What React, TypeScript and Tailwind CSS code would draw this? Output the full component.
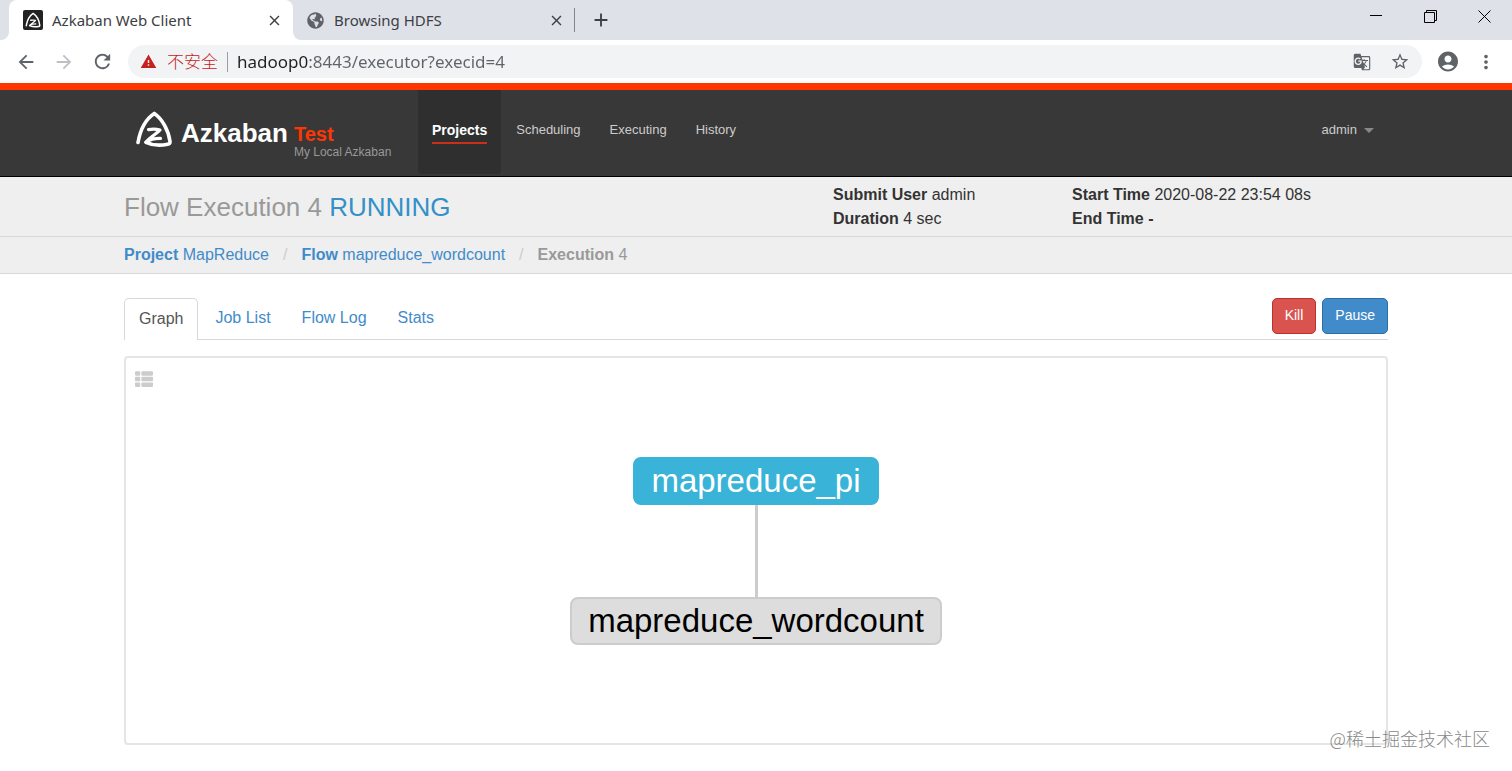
import type { ReactNode } from 'react';
import { FaGlobeAmericas, FaThList } from 'react-icons/fa';
import {
  MdAccountCircle, MdAdd, MdArrowBack, MdArrowForward, MdClose, MdGTranslate,
  MdMoreVert, MdRefresh, MdStarBorder, MdWarning,
} from 'react-icons/md';

const NAV = ['Projects', 'Scheduling', 'Executing', 'History'];
const TABS = ['Graph', 'Job List', 'Flow Log', 'Stats'];

function AzkabanMark({ className }: { className?: string }) {
  return (
    <svg viewBox="0 0 38 38" className={className} fill="none" stroke="currentColor" strokeLinecap="round" strokeLinejoin="round" aria-hidden>
      <path d="M3 32.500C5 21 10 9.500 19.300 3.400C27 8.500 33.500 20 35 31.500C35.200 33.500 34.500 33.900 32.500 34.300C25 35.800 17 35.200 11 32.300" strokeWidth="3.600" />
      <path d="M13.500 19.600C17 19 21.500 19 25 20C22 23.500 16 26.500 11 32C15.500 29.300 20 28.200 25.500 28.400" strokeWidth="3.200" />
    </svg>
  );
}

function IconBtn({ label, className = '', children }: { label: string; className?: string; children: ReactNode }) {
  return (
    <button type="button" aria-label={label} className={`flex flex-none items-center justify-center ${className}`}>
      {children}
    </button>
  );
}

function BrowserChrome() {
  return (
    <div className="bg-white font-['Noto_Sans','Noto_Sans_CJK_SC',sans-serif] text-[#3c4043]">
      {/* Tab strip */}
      <div className="flex h-10">
        <div className="w-[9px] flex-none rounded-br-lg bg-[#dee1e8]" />
        <div className="w-[284px] flex-none bg-linear-to-b from-[#dee1e8] from-50% to-white to-50%">
          <div className="flex h-full items-center rounded-t-lg bg-white pr-[9px] pl-[14px]">
            <span className="flex size-5 flex-none items-center justify-center rounded-xs bg-[#222] text-white">
              <AzkabanMark className="size-4" />
            </span>
            <span className="ml-[9px] flex-1 text-[15px] whitespace-nowrap">Azkaban Web Client</span>
            <IconBtn label="Close tab" className="size-5"><MdClose size={17} /></IconBtn>
          </div>
        </div>
        <div className="flex min-w-0 flex-1 items-center rounded-bl-lg bg-[#dee1e8] pl-[14px]">
          <FaGlobeAmericas size={17} className="flex-none text-[#5f6368]" />
          <span className="ml-[10px] w-[212px] flex-none text-[15px] whitespace-nowrap">Browsing HDFS</span>
          <IconBtn label="Close tab" className="size-5"><MdClose size={17} /></IconBtn>
          <div className="ml-2 h-6 w-px flex-none bg-[#80868b]" />
          <IconBtn label="New tab" className="ml-[14px] size-6"><MdAdd size={22} /></IconBtn>
          <div className="mb-2 ml-auto flex flex-none gap-[30px] pr-4 text-black">
            <IconBtn label="Minimize" className="size-6">
              <svg width="12" height="12" viewBox="0 0 12 12" stroke="currentColor" fill="none"><path d="M0 5.500h12" /></svg>
            </IconBtn>
            <IconBtn label="Restore" className="size-6">
              <svg width="13" height="13" viewBox="0 0 13 13" stroke="currentColor" fill="none"><path d="M.5 2.500h10v10h-10zM2.500 2.500v-2h10v10h-2" /></svg>
            </IconBtn>
            <IconBtn label="Close window" className="size-6">
              <svg width="13" height="13" viewBox="0 0 13 13" stroke="currentColor" fill="none"><path d="M.5.5l12 12M12.500.5l-12 12" /></svg>
            </IconBtn>
          </div>
        </div>
      </div>

      {/* Toolbar */}
      <div className="flex h-[43px] items-center px-[14px] text-[#5f6368]">
        <IconBtn label="Back" className="size-6"><MdArrowBack size={22} /></IconBtn>
        <IconBtn label="Forward" className="ml-[14px] size-6 text-[#bdc1c6]"><MdArrowForward size={22} /></IconBtn>
        <IconBtn label="Reload" className="ml-[14px] size-6"><MdRefresh size={23} /></IconBtn>
        <div className="ml-[14px] flex h-[33px] min-w-0 flex-1 items-center rounded-full bg-[#f1f3f4] px-[12px]">
          <MdWarning size={17} className="flex-none text-[#c5221f]" />
          <span className="ml-[10px] flex-none text-[17px] leading-6 font-light text-[#c5221f]">不安全</span>
          <span className="mx-[9px] h-5 w-px flex-none bg-[#9aa0a6]" />
          <input
            aria-label="Address"
            defaultValue="hadoop0:8443/executor?execid=4"
            className="min-w-0 flex-1 bg-[linear-gradient(to_right,#202124_71px,#5f6368_71px)] bg-clip-text text-[17px] leading-6 text-transparent outline-none"
          />
          <IconBtn label="Translate" className="size-5"><MdGTranslate size={18} /></IconBtn>
          <IconBtn label="Bookmark" className="ml-[18px] size-5"><MdStarBorder size={21} /></IconBtn>
        </div>
        <IconBtn label="Profile" className="ml-[14px] size-6"><MdAccountCircle size={27} /></IconBtn>
        <IconBtn label="Menu" className="ml-[14px] size-6"><MdMoreVert size={22} /></IconBtn>
      </div>
    </div>
  );
}

function Navbar() {
  return (
    <header className="border-t-[7px] border-b border-t-[#ff3601] border-b-black bg-[#383838]">
      <div className="mx-auto flex h-[86px] max-w-[1264px] items-start">
        <a href="#home" className="flex w-[294px] flex-none pt-5 pl-[11px]">
          <AzkabanMark className="size-[38px] flex-none text-white" />
          <span className="ml-2 pt-2 text-[26px] leading-[30px] font-bold text-white">Azkaban</span>
          <span className="ml-[6px] flex flex-col pt-[14px]">
            <span className="text-xl leading-5 font-bold text-[#ff3601]">Test</span>
            <span className="text-xs leading-4 whitespace-nowrap text-[#999]">My Local Azkaban</span>
          </span>
        </a>
        <nav className="flex gap-px">
          {NAV.map((item, i) => (
            <a
              key={item}
              href={`#${item.toLowerCase()}`}
              className={i === 0
                ? 'h-[84px] rounded-b-sm bg-[#2f2f2f] px-[14px] pt-[30px] text-sm leading-5 font-bold text-white'
                : 'h-[84px] px-[14px] pt-[30px] text-[13px] leading-5 text-[#ccc]'}
            >
              <span className={i === 0 ? 'block border-b-2 border-[#c9301c] pb-[2px]' : 'block'}>{item}</span>
            </a>
          ))}
        </nav>
        <button type="button" className="mt-[30px] mr-[14px] ml-auto flex items-center gap-[7px] text-[13px] leading-5 text-[#ccc]">
          admin
          <span className="border-x-[5px] border-t-[5px] border-x-transparent border-t-[#888]" />
        </button>
      </div>
    </header>
  );
}

function FlowHeader() {
  return (
    <div className="bg-[#efefef]">
      <div className="border-b border-[#d8d8d8]">
        <div className="mx-auto flex h-[59px] max-w-[1264px] items-center">
          <h1 className="w-[709px] text-[26px] leading-8 text-[#999]">
            Flow Execution 4 <span className="text-[#3490c8]">RUNNING</span>
          </h1>
          <div className="w-[239px] text-base text-[#333]">
            <p><b>Submit User</b> admin</p>
            <p><b>Duration</b> 4 sec</p>
          </div>
          <div className="text-base text-[#333]">
            <p><b>Start Time</b> 2020-08-22 23:54 08s</p>
            <p><b>End Time</b> <b>-</b></p>
          </div>
        </div>
      </div>
      <div className="border-b border-[#d8d8d8]">
        <ol className="mx-auto flex h-9 max-w-[1264px] items-center text-base text-[#428bca]">
          <li><a href="#project"><b>Project</b> MapReduce</a></li>
          <li aria-hidden className="px-[14px] text-[#ccc]">/</li>
          <li><a href="#flow"><b>Flow</b> mapreduce_wordcount</a></li>
          <li aria-hidden className="px-[14px] text-[#ccc]">/</li>
          <li className="text-[#999]"><b>Execution</b> 4</li>
        </ol>
      </div>
    </div>
  );
}

function FlowGraph() {
  return (
    <div className="relative flex h-[389px] flex-col items-center justify-center rounded-sm border-2 border-[#e5e5e5] text-[33px] leading-[44px]">
      <button type="button" aria-label="Toggle job list" className="absolute top-3 left-[9px] text-[#ccc]">
        <FaThList size={18} />
      </button>
      <div className="rounded-lg border-2 border-[#39b3d7] bg-[#39b3d7] px-4 text-white">mapreduce_pi</div>
      <div className="h-[92px] w-[3px] bg-[#ccc]" />
      <div className="rounded-lg border-2 border-[#ccc] bg-[#ddd] px-4 text-black">mapreduce_wordcount</div>
    </div>
  );
}

export default function App() {
  return (
    <div className="relative min-h-screen bg-white font-['Liberation_Sans',Arial,sans-serif]">
      <BrowserChrome />
      <Navbar />
      <FlowHeader />
      <main className="mx-auto max-w-[1264px] pt-6 pb-[26px]">
        <div className="flex items-start border-b border-[#d8d8d8]">
          <div role="tablist" className="-mb-px flex text-base">
            {TABS.map((tab, i) => (
              <button
                key={tab}
                type="button"
                role="tab"
                aria-selected={i === 0}
                className={i === 0
                  ? 'h-[42px] rounded-t-[5px] border border-b-0 border-[#d8d8d8] bg-white px-[14px] pb-[2px] text-[#555]'
                  : 'ml-[3px] h-10 px-[14px] text-[#428bca]'}
              >
                {tab}
              </button>
            ))}
          </div>
          <div className="ml-auto flex gap-[6px] text-sm text-white">
            <button type="button" className="h-9 rounded-[5px] border border-[#c0302b] bg-[#d9534f] px-3 pb-[2px]">Kill</button>
            <button type="button" className="h-9 rounded-[5px] border border-[#2e6da4] bg-[#428bca] px-3 pb-[2px]">Pause</button>
          </div>
        </div>
        <div className="mt-4">
          <FlowGraph />
        </div>
      </main>
      <div className="absolute right-[22px] bottom-5 font-['Noto_Sans_CJK_SC',sans-serif] text-lg leading-[26px] font-light text-[#888]">
        @稀土掘金技术社区
      </div>
    </div>
  );
}
